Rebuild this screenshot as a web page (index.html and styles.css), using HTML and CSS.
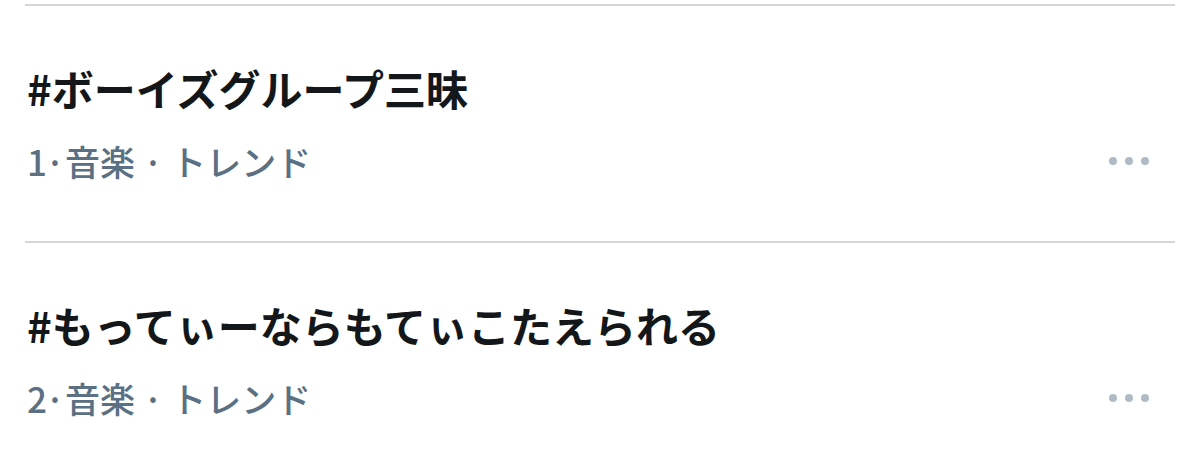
FILE: index.html
```html
<!DOCTYPE html>
<html lang="ja">
<head>
    <meta charset="UTF-8">
    <meta name="viewport" content="width=device-width, initial-scale=1.0">
    <title>トレンド</title>
    <link rel="stylesheet" href="styles.css">
</head>
<body>
    <div class="trend-list">
        <div class="trend-item">
            <div class="trend-title">#ボーイズグループ三昧</div>
            <div class="trend-meta">
                <span>1<span class="sep first">·</span>音楽<span class="sep">·</span>トレンド</span>
                <span class="more"><i></i><i></i><i></i></span>
            </div>
        </div>
        <div class="trend-item">
            <div class="trend-title">#もってぃーならもてぃこたえられる</div>
            <div class="trend-meta">
                <span>2<span class="sep first">·</span>音楽<span class="sep">·</span>トレンド</span>
                <span class="more"><i></i><i></i><i></i></span>
            </div>
        </div>
    </div>
</body>
</html>
```

FILE: styles.css
```css
body {
    margin: 0;
    background-color: #fff;
    font-family: "Noto Sans CJK JP", "Noto Sans", sans-serif;
}
.trend-list {
    margin: 4px 25px 0;
}
.trend-item {
    border-top: 2px solid #d6d6d6;
    height: 237px;
    padding: 55px 2px 0;
    box-sizing: border-box;
}
.trend-title {
    font-size: 42px;
    font-weight: bold;
    color: #14171a;
    line-height: 54px;
}
.trend-meta {
    display: flex;
    justify-content: space-between;
    align-items: center;
    margin-top: 24px;
    font-size: 35px;
    font-weight: 500;
    color: #5b7083;
    line-height: 44px;
}
.sep {
    margin: 0 8px;
}
.sep.first {
    margin: 0 0 0 -2px;
}
.more {
    display: flex;
    gap: 8px;
    margin-right: 24px;
}
.more i {
    width: 8px;
    height: 8px;
    border-radius: 50%;
    background-color: #aebbc5;
}
```
